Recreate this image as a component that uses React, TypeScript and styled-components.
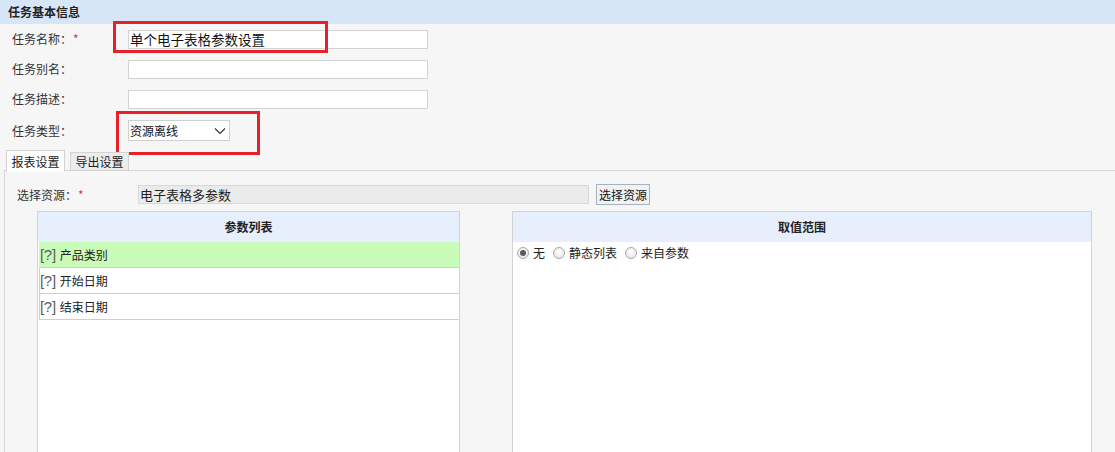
import React from "react";
import styled, { createGlobalStyle } from "styled-components";

const GlobalStyle = createGlobalStyle`
  *, *::before, *::after { box-sizing: border-box; }
  html, body {
    margin: 0;
    padding: 0;
    background: #f6f6f6;
    overflow: hidden;
    font-family: "Noto Sans CJK SC", "Noto Sans", sans-serif;
    font-size: 12px;
    color: #333;
  }
`;

const Page = styled.div`
  width: 1115px;
  height: 452px;
  background: #f6f6f6;
  overflow: hidden;
`;

const SectionHeader = styled.div`
  height: 24px;
  line-height: 24px;
  background: #d6e6f6;
  padding-left: 8px;
  font-weight: bold;
  font-size: 12px;
  color: #222;
`;

const FormRow = styled.div<{ $h: number }>`
  display: flex;
  align-items: center;
  height: ${(p) => p.$h}px;
`;

const Label = styled.div<{ $w: number; $pl: number }>`
  width: ${(p) => p.$w}px;
  padding-left: ${(p) => p.$pl}px;
  flex-shrink: 0;
  font-size: 12px;
  color: #333;
  line-height: 16px;
  white-space: nowrap;
`;

const Star = styled.span`
  color: #e53333;
  margin-left: 1px;
`;

const FieldWrap = styled.div`
  position: relative;
  display: flex;
`;

const RedBox = styled.div<{ $l: number; $t: number; $w: number; $h: number }>`
  position: absolute;
  left: ${(p) => p.$l}px;
  top: ${(p) => p.$t}px;
  width: ${(p) => p.$w}px;
  height: ${(p) => p.$h}px;
  border: 3px solid #e8202a;
  pointer-events: none;
  z-index: 1;
`;

const TextInput = styled.input`
  width: 300px;
  height: 19px;
  border: 1px solid #d3d3d3;
  background: #fff;
  padding: 0 1px;
  margin: 0;
  font-family: "Noto Sans CJK SC", sans-serif;
  font-size: 13.5px;
  color: #111;
  outline: none;
`;

const SelectBox = styled.div`
  width: 102px;
  height: 21px;
  border: 1px solid #cfcfcf;
  background: #fff;
  display: flex;
  align-items: center;
  justify-content: space-between;
  padding: 0 3px 0 1px;
  font-size: 12px;
  color: #111;
`;

const TabBar = styled.div`
  display: flex;
  align-items: flex-end;
  gap: 5px;
  padding-left: 6px;
  margin-top: 2px;
  height: 22px;
  position: relative;
  z-index: 2;
`;

const Tab = styled.div<{ $active?: boolean }>`
  width: 59px;
  height: ${(p) => (p.$active ? 22 : 19)}px;
  border: 1px solid #d3d3d3;
  border-bottom: ${(p) => (p.$active ? "1px solid #fff" : "1px solid #d3d3d3")};
  margin-bottom: ${(p) => (p.$active ? -1 : 0)}px;
  background: ${(p) => (p.$active ? "#ffffff" : "#ececec")};
  display: flex;
  align-items: center;
  justify-content: center;
  font-size: 12px;
  color: #222;
`;

const TabPanel = styled.div`
  margin-left: 4px;
  margin-top: -1px;
  border-top: 1px solid #d6d6d6;
  border-left: 1px solid #d6d6d6;
  padding-top: 13px;
`;

const ReadonlyInput = styled.div`
  width: 451px;
  height: 19px;
  background: #ebebeb;
  border: 1px solid #d8d8d8;
  padding-left: 1px;
  font-size: 13px;
  line-height: 17px;
  color: #222;
`;

const Button = styled.div`
  margin-left: 7px;
  height: 21px;
  width: 54px;
  border: 1px solid #a3b1c2;
  background: #f2f2f2;
  font-size: 12px;
  line-height: 19px;
  text-align: center;
  color: #111;
`;

const PanelsRow = styled.div`
  display: flex;
  gap: 52px;
  margin-top: 6px;
  padding-left: 32px;
`;

const Panel = styled.div<{ $w: number }>`
  width: ${(p) => p.$w}px;
  height: 260px;
  border: 1px solid #d3d3d3;
  background: #fff;
  flex-shrink: 0;
`;

const PanelHeader = styled.div`
  height: 30px;
  line-height: 30px;
  background: #e8effc;
  text-align: center;
  font-weight: bold;
  font-size: 12px;
  color: #222;
`;

const ParamList = styled.div`
  padding-left: 1px;
`;

const ParamRow = styled.div<{ $selected?: boolean }>`
  height: 26px;
  display: flex;
  align-items: center;
  gap: 4px;
  border-left: 1px solid ${(p) => (p.$selected ? "#c9fcb9" : "#cfcfcf")};
  border-bottom: 1px solid #cfcfcf;
  background: ${(p) => (p.$selected ? "#c9fcb9" : "#fff")};
  font-size: 12px;
  color: #222;
`;

const Q = styled.span`
  font-size: 15px;
  color: #5c5c5c;
  font-family: "Liberation Sans", sans-serif;
  letter-spacing: -0.3px;
`;

const RadioGroup = styled.div`
  display: flex;
  align-items: center;
  padding: 1px 0 0 4px;
  height: 20px;
`;

const RadioOption = styled.label`
  display: flex;
  align-items: center;
  gap: 4px;
  margin-right: 8px;
  font-size: 12px;
  color: #222;
`;

const RadioDot = styled.span<{ $checked?: boolean }>`
  width: 12px;
  height: 12px;
  border-radius: 50%;
  border: 1px solid #a9a9a9;
  background: radial-gradient(circle at 50% 40%, #fdfdfd 0%, #e2e2e2 100%);
  display: flex;
  align-items: center;
  justify-content: center;
  &::after {
    content: "";
    width: 6px;
    height: 6px;
    border-radius: 50%;
    background: ${(p) => (p.$checked ? "#5a5a5a" : "transparent")};
  }
`;

const Chevron = () => (
  <svg width="12" height="8" viewBox="0 0 12 8">
    <path d="M1 1.5 L6 6.5 L11 1.5" fill="none" stroke="#333" strokeWidth="1.2" />
  </svg>
);

export default function App() {
  return (
    <Page>
      <GlobalStyle />
      <SectionHeader>任务基本信息</SectionHeader>

      <FormRow $h={30}>
        <Label $w={128} $pl={12}>
          任务名称：<Star>*</Star>
        </Label>
        <FieldWrap>
          <RedBox $l={-15} $t={-9} $w={215} $h={32} />
          <TextInput defaultValue="单个电子表格参数设置" />
        </FieldWrap>
      </FormRow>
      <FormRow $h={30}>
        <Label $w={128} $pl={12}>任务别名：</Label>
        <TextInput defaultValue="" />
      </FormRow>
      <FormRow $h={30}>
        <Label $w={128} $pl={12}>任务描述：</Label>
        <TextInput defaultValue="" />
      </FormRow>
      <FormRow $h={33}>
        <Label $w={128} $pl={12}>任务类型：</Label>
        <FieldWrap>
          <RedBox $l={-12} $t={-9} $w={144} $h={44} />
          <SelectBox>
            <span>资源离线</span>
            <Chevron />
          </SelectBox>
        </FieldWrap>
      </FormRow>

      <TabBar>
        <Tab $active>报表设置</Tab>
        <Tab>导出设置</Tab>
      </TabBar>
      <TabPanel>
        <FormRow $h={21}>
          <Label $w={133} $pl={12}>
            选择资源：<Star>*</Star>
          </Label>
          <ReadonlyInput>电子表格多参数</ReadonlyInput>
          <Button>选择资源</Button>
        </FormRow>
        <PanelsRow>
          <Panel $w={423}>
            <PanelHeader>参数列表</PanelHeader>
            <ParamList>
              <ParamRow $selected>
                <Q>[?]</Q>
                <span>产品类别</span>
              </ParamRow>
              <ParamRow>
                <Q>[?]</Q>
                <span>开始日期</span>
              </ParamRow>
              <ParamRow>
                <Q>[?]</Q>
                <span>结束日期</span>
              </ParamRow>
            </ParamList>
          </Panel>
          <Panel $w={580}>
            <PanelHeader>取值范围</PanelHeader>
            <RadioGroup>
              <RadioOption>
                <RadioDot $checked />
                无
              </RadioOption>
              <RadioOption>
                <RadioDot />
                静态列表
              </RadioOption>
              <RadioOption>
                <RadioDot />
                来自参数
              </RadioOption>
            </RadioGroup>
          </Panel>
        </PanelsRow>
      </TabPanel>
    </Page>
  );
}
